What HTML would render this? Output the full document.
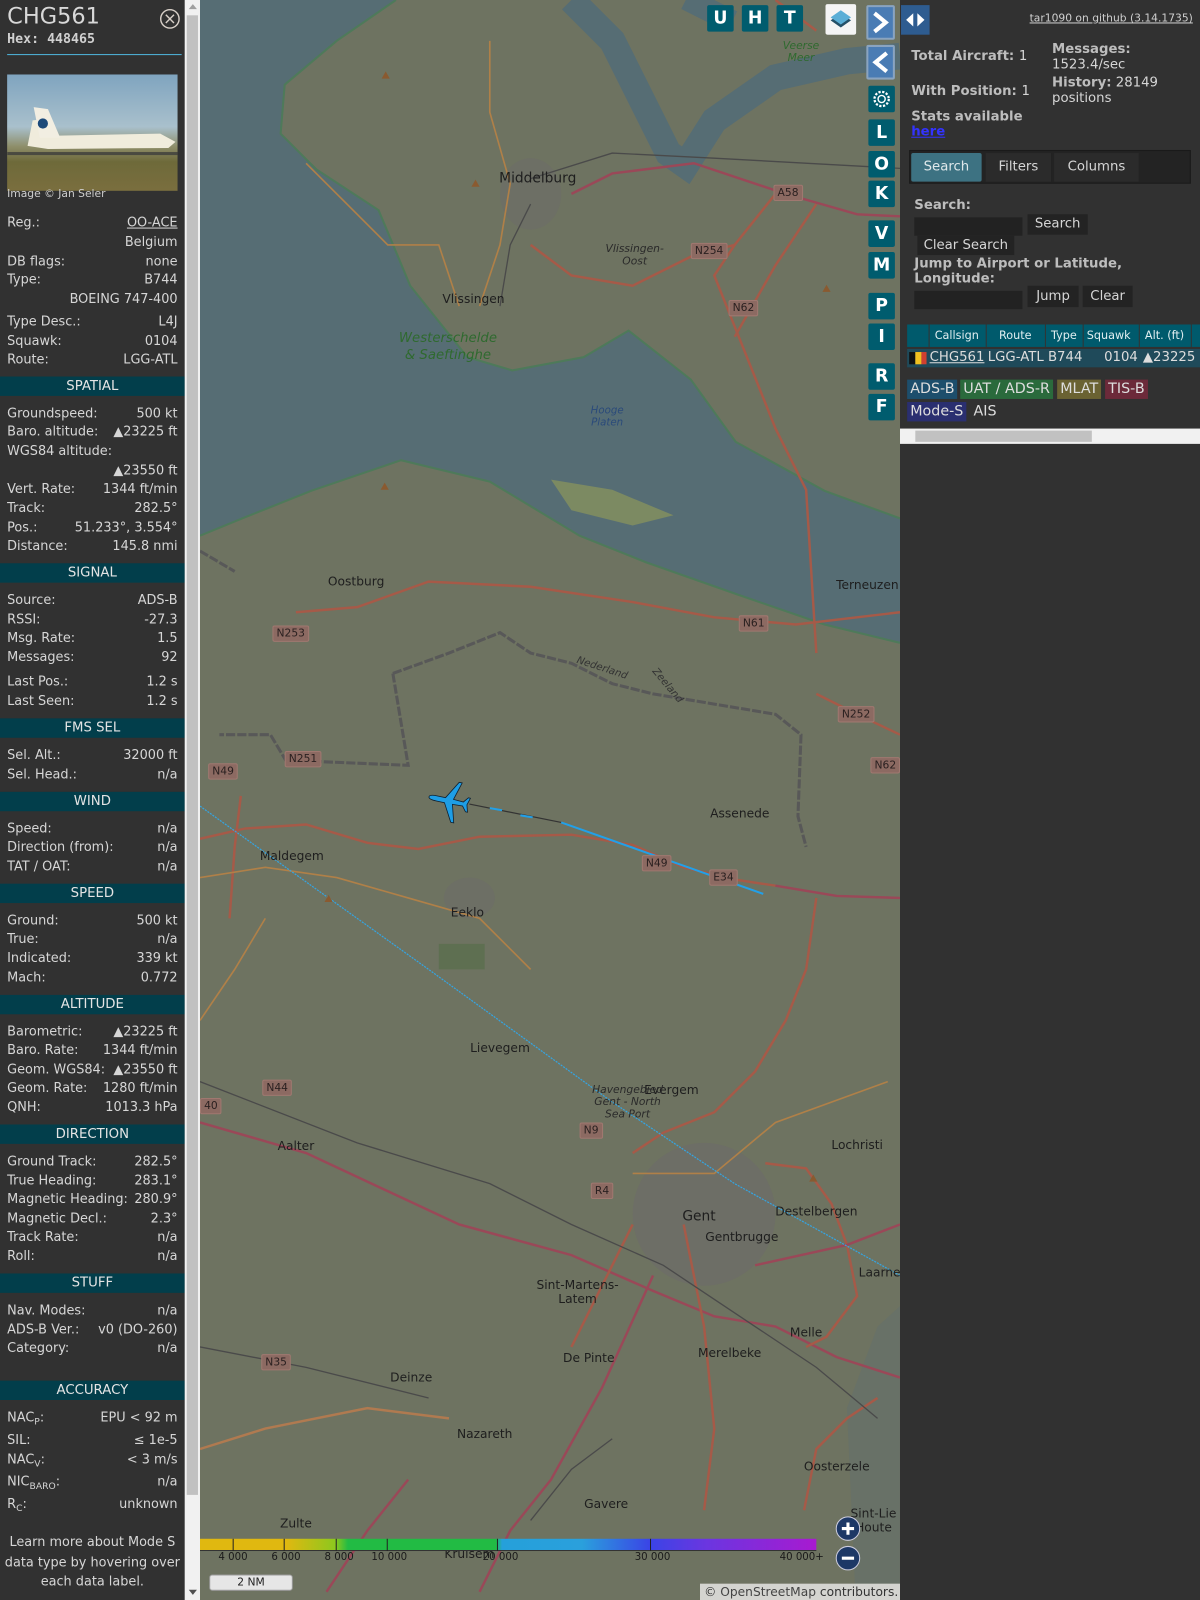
<!DOCTYPE html>
<html><head><meta charset="utf-8">
<style>
*{margin:0;padding:0;box-sizing:border-box}
html,body{width:1200px;height:1600px;overflow:hidden;background:#313131}
#wrap{position:absolute;left:0;top:0;width:1176px;height:1568px;transform:scale(1.020408);transform-origin:0 0;font-family:"DejaVu Sans","Liberation Sans",sans-serif;color:#d6d6d6}
#left{position:absolute;left:0;top:0;width:181px;height:1568px;background:#313131;font-size:12.6px}
.r{position:absolute;left:7px;width:167px;height:18px;line-height:18px;display:flex;justify-content:space-between;white-space:nowrap}
.r span:last-child{text-align:right}
.h{position:absolute;left:0;width:181px;height:19px;line-height:19px;background:#023e4b;text-align:center;color:#e4e4e4;font-size:13px}
sub{font-size:9px;vertical-align:-3px}
#vs{position:absolute;left:181px;top:0;width:15px;height:1568px;background:#f1f1f1}
#vs .t{position:absolute;left:2px;top:15px;width:11px;height:1450px;background:#c1c1c1}
#map{position:absolute;left:196px;top:0;width:686px;height:1568px;background:#6e7361;overflow:hidden}
#right{position:absolute;left:882px;top:0;width:294px;height:1568px;background:#313131;font-size:13px;overflow:hidden}
.btn{position:absolute;width:26px;height:26px;background:#005c6e;color:#fff;font-weight:bold;font-size:17px;text-align:center;line-height:26px;border-radius:2px;font-family:"DejaVu Sans",sans-serif}
.sh{position:absolute;background:#8c6a62;border:1px solid #a07870;color:#2a2020;font-size:10.5px;padding:0 3px;height:16px;line-height:14px;border-radius:2px}
.tw{position:absolute;color:#1e1e1e;font-size:12px;white-space:nowrap;transform:translate(-50%,-50%)}
.lab{font-weight:bold;color:#bdbdbd}
.bd{position:absolute;height:19px;line-height:19px;padding:0 3px;font-size:14px;color:#ddd}
</style></head><body><div id="wrap">

<div id="left">
 <div style="position:absolute;left:7px;top:4px;font-size:22px;color:#d8d8d8">CHG561</div>
 <div style="position:absolute;left:7px;top:31px;font-size:13px;font-weight:bold;font-family:'DejaVu Sans Mono','Liberation Mono',monospace;color:#d0d0d0">Hex: 448465</div>
 <svg style="position:absolute;left:156px;top:8px" width="21" height="21"><circle cx="10.5" cy="10.5" r="9" fill="none" stroke="#d8d0c8" stroke-width="1.4"/><path d="M6.5 6.5L14.5 14.5M14.5 6.5L6.5 14.5" stroke="#d8d0c8" stroke-width="1.4"/></svg>
 <div style="position:absolute;left:7px;top:53px;width:171px;height:1px;background:#4fb4dc"></div>
 <div style="position:absolute;left:7px;top:73px;width:167px;height:114px;background:linear-gradient(#7fa4bf 0%,#a9c0cc 45%,#8e8e6a 62%,#6e6a3a 75%,#7a6e3e 100%);overflow:hidden">
  <svg width="167" height="114"><path d="M25 45 L34 44 L45 60 L150 58 L165 66 L158 72 L40 73 L20 70 Z" fill="#f0ecdc"/><path d="M26 32 L40 34 L52 62 L32 62 Z" fill="#f2eee2"/><circle cx="35" cy="48" r="5" fill="#1d4a7a"/><rect x="0" y="76" width="167" height="3" fill="#4a4a40"/></svg>
 </div>
 <div style="position:absolute;left:7px;top:184px;font-size:10.5px;color:#cfcfcf">Image © Jan Seler</div>

 <div class="r" style="top:209px"><span>Reg.:</span><span style="text-decoration:underline">OO-ACE</span></div>
 <div class="r" style="top:228px"><span></span><span>Belgium</span></div>
 <div class="r" style="top:247px"><span>DB flags:</span><span>none</span></div>
 <div class="r" style="top:265px"><span>Type:</span><span>B744</span></div>
 <div class="r" style="top:284px"><span></span><span>BOEING 747-400</span></div>
 <div class="r" style="top:306px"><span>Type Desc.:</span><span>L4J</span></div>
 <div class="r" style="top:325px"><span>Squawk:</span><span>0104</span></div>
 <div class="r" style="top:343px"><span>Route:</span><span>LGG-ATL</span></div>

 <div class="h" style="top:369px">SPATIAL</div>
 <div class="r" style="top:396px"><span>Groundspeed:</span><span>500 kt</span></div>
 <div class="r" style="top:414px"><span>Baro. altitude:</span><span>▲23225 ft</span></div>
 <div class="r" style="top:433px"><span>WGS84 altitude:</span><span></span></div>
 <div class="r" style="top:452px"><span></span><span>▲23550 ft</span></div>
 <div class="r" style="top:470px"><span>Vert. Rate:</span><span>1344 ft/min</span></div>
 <div class="r" style="top:489px"><span>Track:</span><span>282.5°</span></div>
 <div class="r" style="top:508px"><span>Pos.:</span><span>51.233°, 3.554°</span></div>
 <div class="r" style="top:526px"><span>Distance:</span><span>145.8 nmi</span></div>

 <div class="h" style="top:552px">SIGNAL</div>
 <div class="r" style="top:579px"><span>Source:</span><span>ADS-B</span></div>
 <div class="r" style="top:598px"><span>RSSI:</span><span>-27.3</span></div>
 <div class="r" style="top:616px"><span>Msg. Rate:</span><span>1.5</span></div>
 <div class="r" style="top:635px"><span>Messages:</span><span>92</span></div>
 <div class="r" style="top:659px"><span>Last Pos.:</span><span>1.2 s</span></div>
 <div class="r" style="top:678px"><span>Last Seen:</span><span>1.2 s</span></div>

 <div class="h" style="top:704px">FMS SEL</div>
 <div class="r" style="top:731px"><span>Sel. Alt.:</span><span>32000 ft</span></div>
 <div class="r" style="top:750px"><span>Sel. Head.:</span><span>n/a</span></div>

 <div class="h" style="top:776px">WIND</div>
 <div class="r" style="top:803px"><span>Speed:</span><span>n/a</span></div>
 <div class="r" style="top:821px"><span>Direction (from):</span><span>n/a</span></div>
 <div class="r" style="top:840px"><span>TAT / OAT:</span><span>n/a</span></div>

 <div class="h" style="top:866px">SPEED</div>
 <div class="r" style="top:893px"><span>Ground:</span><span>500 kt</span></div>
 <div class="r" style="top:911px"><span>True:</span><span>n/a</span></div>
 <div class="r" style="top:930px"><span>Indicated:</span><span>339 kt</span></div>
 <div class="r" style="top:949px"><span>Mach:</span><span>0.772</span></div>

 <div class="h" style="top:975px">ALTITUDE</div>
 <div class="r" style="top:1002px"><span>Barometric:</span><span>▲23225 ft</span></div>
 <div class="r" style="top:1020px"><span>Baro. Rate:</span><span>1344 ft/min</span></div>
 <div class="r" style="top:1039px"><span>Geom. WGS84:</span><span>▲23550 ft</span></div>
 <div class="r" style="top:1057px"><span>Geom. Rate:</span><span>1280 ft/min</span></div>
 <div class="r" style="top:1076px"><span>QNH:</span><span>1013.3 hPa</span></div>

 <div class="h" style="top:1102px">DIRECTION</div>
 <div class="r" style="top:1129px"><span>Ground Track:</span><span>282.5°</span></div>
 <div class="r" style="top:1148px"><span>True Heading:</span><span>283.1°</span></div>
 <div class="r" style="top:1166px"><span>Magnetic Heading:</span><span>280.9°</span></div>
 <div class="r" style="top:1185px"><span>Magnetic Decl.:</span><span>2.3°</span></div>
 <div class="r" style="top:1203px"><span>Track Rate:</span><span>n/a</span></div>
 <div class="r" style="top:1222px"><span>Roll:</span><span>n/a</span></div>

 <div class="h" style="top:1248px">STUFF</div>
 <div class="r" style="top:1275px"><span>Nav. Modes:</span><span>n/a</span></div>
 <div class="r" style="top:1294px"><span>ADS-B Ver.:</span><span>v0 (DO-260)</span></div>
 <div class="r" style="top:1312px"><span>Category:</span><span>n/a</span></div>

 <div class="h" style="top:1353px">ACCURACY</div>
 <div class="r" style="top:1380px"><span>NAC<sub>P</sub>:</span><span>EPU &lt; 92 m</span></div>
 <div class="r" style="top:1402px"><span>SIL:</span><span>≤ 1e-5</span></div>
 <div class="r" style="top:1421px"><span>NAC<sub>V</sub>:</span><span>&lt; 3 m/s</span></div>
 <div class="r" style="top:1443px"><span>NIC<sub>BARO</sub>:</span><span>n/a</span></div>
 <div class="r" style="top:1465px"><span>R<sub>C</sub>:</span><span>unknown</span></div>
 <div style="position:absolute;left:0;top:1501px;width:181px;text-align:center;line-height:19.5px;font-size:12.6px">Learn more about Mode S<br>data type by hovering over<br>each data label.</div>
</div>
<div id="vs"><div class="t"></div>
 <div style="position:absolute;left:4px;top:4px;width:0;height:0;border-left:4px solid transparent;border-right:4px solid transparent;border-bottom:5px solid #a0a0a0"></div>
 <div style="position:absolute;left:4px;top:1558px;width:0;height:0;border-left:4px solid transparent;border-right:4px solid transparent;border-top:5px solid #505050"></div>
</div>

<div id="map">
<svg width="686" height="1568" style="position:absolute;left:0;top:0">
 <g transform="translate(-196,0)">
 <path d="M196 0 L388 0 L330 40 L279 83 L275 131 L310 166 L371 206 L402 280 L458 350 L502 363 L572 350 L616 324 L677 372 L721 433 L808 481 L882 508 L882 630 L808 612 L721 582 L633 551 L568 525 L480 472 L393 451 L305 481 L240 507 L196 525 Z" fill="#566d74"/>
 <path d="M560 0 L600 40 L630 100 L655 150 L672 162 L700 118 L760 76 L830 60 L882 55" fill="none" stroke="#566d74" stroke-width="26"/>
 <path d="M700 0 L690 20" stroke="#566d74" stroke-width="50"/>
 <path d="M830 1380 L860 1300 L882 1280 L882 1600 L840 1600 Z" fill="#62706e" opacity="0.5"/>
 <path d="M540 470 L600 480 L660 505 L620 515 L560 500 Z" fill="#7c8a62"/>
 <path d="M388 0 L330 40 L279 83 L275 131 L310 166 L371 206 L402 280 L458 350 L502 363 L572 350 L616 324 L677 372 L721 433 L808 481 L882 508" fill="none" stroke="#4e7a5a" stroke-width="2"/>
 <path d="M882 630 L808 612 L721 582 L633 551 L568 525 L480 472 L393 451 L305 481 L240 507 L196 525" fill="none" stroke="#4e7a5a" stroke-width="2"/>
 <ellipse cx="690" cy="1190" rx="70" ry="70" fill="#6c6c68" opacity="0.7"/>
 <ellipse cx="520" cy="190" rx="30" ry="35" fill="#6c6c68" opacity="0.6"/>
 <ellipse cx="460" cy="880" rx="25" ry="20" fill="#6c6c68" opacity="0.6"/>
 <rect x="430" y="925" width="45" height="25" fill="#5a6e4e" opacity="0.8"/>
 <path d="M196 540 L230 560 M385 660 L400 750 L280 745 L265 720 L215 720 M385 660 L440 640 L490 620 L520 640 L560 650 L600 670 L640 680 L700 690 L760 700 L785 720 L782 800 L790 830" fill="none" stroke="#585858" stroke-width="3" stroke-dasharray="9 2"/>
 <g fill="none" stroke="#a65a48" stroke-width="2.4">
  <path d="M196 822 L240 812 L300 808 L360 826 L410 832 L470 820 L560 818 L620 828 L670 850 L720 862 L760 868"/>
  <path d="M760 868 L820 878 L882 880" stroke="#9a4858"/>
  <path d="M236 780 L230 830 L225 900"/>
  <path d="M290 600 L350 595 L420 570 L520 575 L620 590 L700 605 L780 612 L882 600"/>
  <path d="M760 0 L800 30 M760 190 L720 240 L700 270 L720 320 L760 420 L790 480 L795 560 L800 640"/>
  <path d="M720 330 L760 260 L800 200" />
  <path d="M560 190 L600 170 L680 160 L770 190 L840 210 L882 212" stroke="#9a4858"/>
  <path d="M520 240 L560 270 L620 280 L680 250 L720 240"/>
  <path d="M800 680 L840 700 L882 720"/>
  <path d="M196 1100 L300 1130 L450 1200 L560 1230 L640 1265 L700 1290 L760 1300 L820 1330 L882 1350" stroke="#9a4858"/>
  <path d="M620 1130 L650 1110 L700 1090 L740 1050 L770 1000 L790 950 L800 880"/>
  <path d="M750 1140 L790 1145 L815 1180 L830 1220 L840 1270 L810 1310 L790 1320"/>
  <path d="M740 1240 L830 1220 L882 1200" stroke="#9a4858"/>
  <path d="M670 1200 L690 1300 L700 1400 L690 1480"/>
  <path d="M640 1250 L590 1360 L540 1450 L500 1500 L470 1560" stroke="#9a4858"/>
  <path d="M196 1420 L260 1400 L360 1380 L440 1390" stroke="#b07a50"/>
  <path d="M620 1200 L580 1280 L560 1320"/>
  <path d="M320 1560 L360 1500 L400 1450" stroke="#9a4858"/>
  <path d="M788 1480 L800 1420 L830 1390 L860 1370"/>
 </g>
 <g fill="none" stroke="#b08048" stroke-width="1.6">
  <path d="M300 160 L340 200 L380 240 L430 240 L450 300 M470 300 L490 240 L500 180 L480 110 L480 40"/>
  <path d="M196 860 L260 850 L330 860 L400 880 L470 900 L520 950"/>
  <path d="M196 1000 L230 950 L260 900"/>
  <path d="M620 1150 L700 1150 L760 1100 L870 1060"/>
 </g>
 <g fill="none" stroke="#4a4a4a" stroke-width="1.3">
  <path d="M520 175 L600 150 L700 155 L882 165"/>
  <path d="M490 300 L500 240 L520 200"/>
  <path d="M196 1060 L350 1120 L480 1160 L560 1200 L650 1240 L740 1300 L800 1340 L860 1390"/>
  <path d="M196 1320 L300 1340 L420 1370"/>
  <path d="M520 1490 L560 1440 L600 1410"/>
 </g>
 <path d="M196 790 L420 950 L600 1080 L720 1160 L882 1250" fill="none" stroke="#35a4e0" stroke-width="1.2" stroke-dasharray="2 1"/>
 <path d="M460 788 L550 806" stroke="#333" stroke-width="1.2"/>
 <path d="M550 806 L748 876" stroke="#22a0e8" stroke-width="2"/>
 <path d="M480 792 L492 794 M510 799 L522 801" stroke="#22a0e8" stroke-width="2"/>
 <g fill="#8a5a30">
  <path d="M373 480 l4 -7 l4 7z"/><path d="M318 884 l4 -7 l4 7z"/><path d="M793 1158 l4 -7 l4 7z"/><path d="M374 77 l4 -7 l4 7z"/><path d="M462 183 l4 -7 l4 7z"/><path d="M806 286 l4 -7 l4 7z"/>
 </g>
 </g>
 <g transform="translate(244,785) rotate(-78)">
  <path d="M0 -20 C2 -20 2.5 -16 2.5 -12 L2.5 -4 L20 6 L20 9 L2.5 4 L2 14 L7 18 L7 20 L0 18 L-7 20 L-7 18 L-2 14 L-2.5 4 L-20 9 L-20 6 L-2.5 -4 L-2.5 -12 C-2.5 -16 -2 -20 0 -20Z" fill="#1e9ee6" stroke="#102030" stroke-width="0.8"/>
 </g>
</svg>

<div class="tw" style="left:331px;top:175px;font-size:13.5px">Middelburg</div>
<div class="tw" style="left:268px;top:293px">Vlissingen</div>
<div class="tw" style="left:243px;top:340px;color:#2f6a2f;font-style:italic;font-size:13px;line-height:17px;text-align:center">Westerschelde<br>&amp; Saeftinghe</div>
<div class="tw" style="left:153px;top:570px">Oostburg</div>
<div class="tw" style="left:654px;top:573px">Terneuzen</div>
<div class="tw" style="left:90px;top:839px">Maldegem</div>
<div class="tw" style="left:262px;top:894px">Eeklo</div>
<div class="tw" style="left:529px;top:797px">Assenede</div>
<div class="tw" style="left:294px;top:1027px">Lievegem</div>
<div class="tw" style="left:462px;top:1068px">Evergem</div>
<div class="tw" style="left:94px;top:1123px">Aalter</div>
<div class="tw" style="left:489px;top:1192px;font-size:13.5px">Gent</div>
<div class="tw" style="left:531px;top:1212px">Gentbrugge</div>
<div class="tw" style="left:604px;top:1187px">Destelbergen</div>
<div class="tw" style="left:644px;top:1122px">Lochristi</div>
<div class="tw" style="left:370px;top:1266px;text-align:center;line-height:14px">Sint-Martens-<br>Latem</div>
<div class="tw" style="left:207px;top:1350px">Deinze</div>
<div class="tw" style="left:381px;top:1331px">De Pinte</div>
<div class="tw" style="left:519px;top:1326px">Merelbeke</div>
<div class="tw" style="left:594px;top:1306px">Melle</div>
<div class="tw" style="left:279px;top:1405px">Nazareth</div>
<div class="tw" style="left:624px;top:1437px">Oosterzele</div>
<div class="tw" style="left:398px;top:1474px">Gavere</div>
<div class="tw" style="left:94px;top:1493px">Zulte</div>
<div class="tw" style="left:666px;top:1247px">Laarne</div>
<div class="tw" style="left:264px;top:1523px">Kruisem</div>
<div class="tw" style="left:660px;top:1490px;line-height:14px;text-align:center">Sint-Lie<br>Houte</div>
<div class="tw" style="left:419px;top:1080px;font-style:italic;font-size:10.5px;line-height:12px;text-align:center;color:#2a2a2a">Havengebied<br>Gent - North<br>Sea Port</div>
<div class="tw" style="left:589px;top:51px;font-style:italic;font-size:10.5px;line-height:12px;text-align:center;color:#2f6a2f">Veerse<br>Meer</div>
<div class="tw" style="left:426px;top:250px;font-style:italic;font-size:10.5px;line-height:12px;text-align:center;color:#2a2a2a">Vlissingen-<br>Oost</div>
<div class="tw" style="left:399px;top:409px;font-style:italic;font-size:10px;line-height:12px;text-align:center;color:#2a4a7a">Hooge<br>Platen</div>
<div class="tw" style="left:394px;top:655px;font-style:italic;font-size:10px;color:#333;transform:translate(-50%,-50%) rotate(18deg)">Nederland</div>
<div class="tw" style="left:458px;top:672px;font-style:italic;font-size:10px;color:#333;transform:translate(-50%,-50%) rotate(50deg)">Zeeland</div>

<div class="sh" style="left:71px;top:613px">N253</div>
<div class="sh" style="left:83px;top:736px">N251</div>
<div class="sh" style="left:8px;top:748px">N49</div>
<div class="sh" style="left:433px;top:838px">N49</div>
<div class="sh" style="left:499px;top:852px">E34</div>
<div class="sh" style="left:528px;top:603px">N61</div>
<div class="sh" style="left:625px;top:692px">N252</div>
<div class="sh" style="left:657px;top:742px">N62</div>
<div class="sh" style="left:61px;top:1058px">N44</div>
<div class="sh" style="left:372px;top:1100px">N9</div>
<div class="sh" style="left:383px;top:1159px">R4</div>
<div class="sh" style="left:60px;top:1327px">N35</div>
<div class="sh" style="left:0px;top:1076px">40</div>
<div class="sh" style="left:562px;top:181px">A58</div>
<div class="sh" style="left:481px;top:238px">N254</div>
<div class="sh" style="left:518px;top:294px">N62</div>

<div class="btn" style="left:497px;top:5px">U</div>
<div class="btn" style="left:531px;top:5px">H</div>
<div class="btn" style="left:565px;top:5px">T</div>
<div style="position:absolute;left:613px;top:4px;width:30px;height:30px;background:#f4f4f4;border-radius:2px">
 <svg width="30" height="30"><path d="M15 9 L25 16 L15 23 L5 16Z" fill="#245068"/><path d="M15 6 L25 13 L15 20 L5 13Z" fill="#5aaed6"/></svg></div>
<div style="position:absolute;left:653px;top:5px;width:28px;height:34px;background:#4a7cb4;border:2px solid #8aa4c0;border-radius:2px"><svg width="24" height="30"><path d="M6 6 L17 15 L6 24" fill="none" stroke="#fff" stroke-width="4"/></svg></div>
<div style="position:absolute;left:653px;top:44px;width:28px;height:34px;background:#4a7cb4;border:2px solid #8aa4c0;border-radius:2px"><svg width="24" height="30"><path d="M18 6 L7 15 L18 24" fill="none" stroke="#fff" stroke-width="4"/></svg></div>
<div class="btn" style="left:655px;top:84px"><svg width="26" height="26"><circle cx="13" cy="13" r="3.5" fill="none" stroke="#fff" stroke-width="1.4"/><circle cx="13" cy="13" r="7" fill="none" stroke="#fff" stroke-width="2.2" stroke-dasharray="2.2 1.5"/></svg></div>
<div class="btn" style="left:655px;top:117px">L</div>
<div class="btn" style="left:655px;top:148px">O</div>
<div class="btn" style="left:655px;top:177px">K</div>
<div class="btn" style="left:655px;top:216px">V</div>
<div class="btn" style="left:655px;top:247px">M</div>
<div class="btn" style="left:655px;top:287px">P</div>
<div class="btn" style="left:655px;top:317px">I</div>
<div class="btn" style="left:655px;top:356px">R</div>
<div class="btn" style="left:655px;top:386px">F</div>

<div style="position:absolute;left:0;top:1508px;width:604px;height:12px;background:linear-gradient(90deg,#e0b810 0%,#e0b810 14%,#8cc81e 22%,#22bb44 24%,#22bb44 48%,#25a0da 49%,#2aa0dc 62%,#3a44e6 73%,#6a36e0 82%,#a81ad0 100%);border-bottom:1px solid #333"></div>
<div style="position:absolute;left:32px;top:1508px;width:1px;height:12px;background:#222"></div>
<div style="position:absolute;left:82px;top:1508px;width:1px;height:12px;background:#222"></div>
<div style="position:absolute;left:133px;top:1508px;width:1px;height:12px;background:#222"></div>
<div style="position:absolute;left:183px;top:1508px;width:1px;height:12px;background:#222"></div>
<div style="position:absolute;left:291px;top:1508px;width:1px;height:12px;background:#222"></div>
<div style="position:absolute;left:441px;top:1508px;width:1px;height:12px;background:#222"></div>
<div style="position:absolute;left:0;top:1521px;width:686px;font-size:10px;color:#1a1a1a">
 <span style="position:absolute;left:18px">4 000</span><span style="position:absolute;left:70px">6 000</span><span style="position:absolute;left:122px">8 000</span><span style="position:absolute;left:168px">10 000</span><span style="position:absolute;left:277px">20 000</span><span style="position:absolute;left:426px">30 000</span><span style="position:absolute;left:568px">40 000+</span></div>
<div style="position:absolute;left:9px;top:1543px;width:82px;height:16px;background:#e6e6e6;border:1px solid #999;border-radius:3px;font-size:10.5px;text-align:center;line-height:14px;color:#222">2 NM</div>
<div style="position:absolute;left:623px;top:1486px;width:24px;height:24px;border-radius:12px;background:#1d3866;border:1px solid #ccd"><svg width="24" height="24"><path d="M11 5v12M5 11h12" stroke="#fff" stroke-width="3"/></svg></div>
<div style="position:absolute;left:623px;top:1515px;width:24px;height:24px;border-radius:12px;background:#1d3866;border:1px solid #ccd"><svg width="24" height="24"><path d="M5 11h12" stroke="#fff" stroke-width="3"/></svg></div>
<div style="position:absolute;left:490px;top:1552px;width:196px;height:16px;background:#d4d4d0;font-size:12px;line-height:16px;color:#333;padding-left:4px">© <span style="color:#444">OpenStreetMap</span> contributors.</div>
</div>

<div id="right">
 <div style="position:absolute;left:1px;top:5px;width:28px;height:29px;background:#2e5c90"><svg width="28" height="29"><path d="M5 14.5 L12 8 L12 21Z M23 14.5 L16 8 L16 21Z" fill="#fff"/></svg></div>
 <div style="position:absolute;right:7px;top:12px;font-size:10.5px;text-decoration:underline;color:#cfcfcf">tar1090 on github (3.14.1735)</div>
 <div style="position:absolute;left:11px;top:48px" class="lab">Total Aircraft: <span style="font-weight:normal;color:#d6d6d6">1</span></div>
 <div style="position:absolute;left:11px;top:82px" class="lab">With Position: <span style="font-weight:normal;color:#d6d6d6">1</span></div>
 <div style="position:absolute;left:11px;top:107px;line-height:15px" class="lab">Stats available<br><span style="color:#3333ff;text-decoration:underline">here</span></div>
 <div style="position:absolute;left:149px;top:41px;line-height:15px"><span class="lab">Messages:</span><br>1523.4/sec</div>
 <div style="position:absolute;left:149px;top:74px;line-height:15px"><span class="lab">History:</span> 28149<br>positions</div>
 <div style="position:absolute;left:9px;top:147px;width:276px;height:33px;background:#232323;border:1px solid #1a1a1a"></div>
 <div style="position:absolute;left:11px;top:150px;width:69px;height:28px;background:#3d7282;border-radius:2px;line-height:28px;text-align:center;color:#dfe8ea">Search</div>
 <div style="position:absolute;left:84px;top:150px;width:64px;height:28px;background:#2b2b2b;line-height:28px;text-align:center">Filters</div>
 <div style="position:absolute;left:151px;top:150px;width:83px;height:28px;background:#2b2b2b;line-height:28px;text-align:center">Columns</div>
 <div style="position:absolute;left:14px;top:194px" class="lab">Search:</div>
 <div style="position:absolute;left:14px;top:213px;width:106px;height:18px;background:#222"></div>
 <div style="position:absolute;left:125px;top:210px;width:59px;height:20px;background:#232323;line-height:20px;text-align:center">Search</div>
 <div style="position:absolute;left:17px;top:231px;width:95px;height:19px;background:#232323;line-height:19px;text-align:center">Clear Search</div>
 <div style="position:absolute;left:14px;top:251px;line-height:15px" class="lab">Jump to Airport or Latitude,<br>Longitude:</div>
 <div style="position:absolute;left:14px;top:285px;width:106px;height:18px;background:#222"></div>
 <div style="position:absolute;left:125px;top:280px;width:50px;height:21px;background:#232323;line-height:21px;text-align:center">Jump</div>
 <div style="position:absolute;left:179px;top:280px;width:49px;height:21px;background:#232323;line-height:21px;text-align:center">Clear</div>
 <div style="position:absolute;left:7px;top:318px;width:311px;height:22px;background:#005a6c;font-size:11px;color:#e0eef0;line-height:22px">
  <span style="position:absolute;left:21px;width:1px;height:22px;background:#333"></span>
  <span style="position:absolute;left:27px">Callsign</span>
  <span style="position:absolute;left:77px;width:1px;height:22px;background:#333"></span>
  <span style="position:absolute;left:90px">Route</span>
  <span style="position:absolute;left:135px;width:1px;height:22px;background:#333"></span>
  <span style="position:absolute;left:141px">Type</span>
  <span style="position:absolute;left:172px;width:1px;height:22px;background:#333"></span>
  <span style="position:absolute;left:176px">Squawk</span>
  <span style="position:absolute;left:227px;width:1px;height:22px;background:#333"></span>
  <span style="position:absolute;left:233px">Alt. (ft)</span>
  <span style="position:absolute;left:278px;width:1px;height:22px;background:#333"></span>
 </div>
 <div style="position:absolute;left:7px;top:342px;width:311px;height:18px;background:#1f4a5a;font-size:13px;line-height:18px;color:#ddd">
  <span style="position:absolute;left:2px;top:3px;width:6px;height:12px;background:#111"></span><span style="position:absolute;left:8px;top:3px;width:6px;height:12px;background:#f0c020"></span><span style="position:absolute;left:14px;top:3px;width:5px;height:12px;background:#d04030"></span>
  <span style="position:absolute;left:22px;text-decoration:underline">CHG561</span>
  <span style="position:absolute;left:79px">LGG-ATL</span>
  <span style="position:absolute;left:138px">B744</span>
  <span style="position:absolute;left:193px">0104</span>
  <span style="position:absolute;left:231px">▲23225</span>
 </div>
 <div class="bd" style="left:7px;top:372px;background:#1d4e6c">ADS-B</div>
 <div class="bd" style="left:59px;top:372px;background:#2a6a3c">UAT / ADS-R</div>
 <div class="bd" style="left:154px;top:372px;background:#6a6232">MLAT</div>
 <div class="bd" style="left:201px;top:372px;background:#6c2a3a">TIS-B</div>
 <div class="bd" style="left:7px;top:394px;background:#2a2f70">Mode-S</div>
 <div class="bd" style="left:69px;top:394px">AIS</div>
 <div style="position:absolute;left:0;top:420px;width:294px;height:15px;background:#f1f1f1"><div style="position:absolute;left:15px;top:2px;width:173px;height:11px;background:#c1c1c1"></div></div>
</div>
</div></body></html>
